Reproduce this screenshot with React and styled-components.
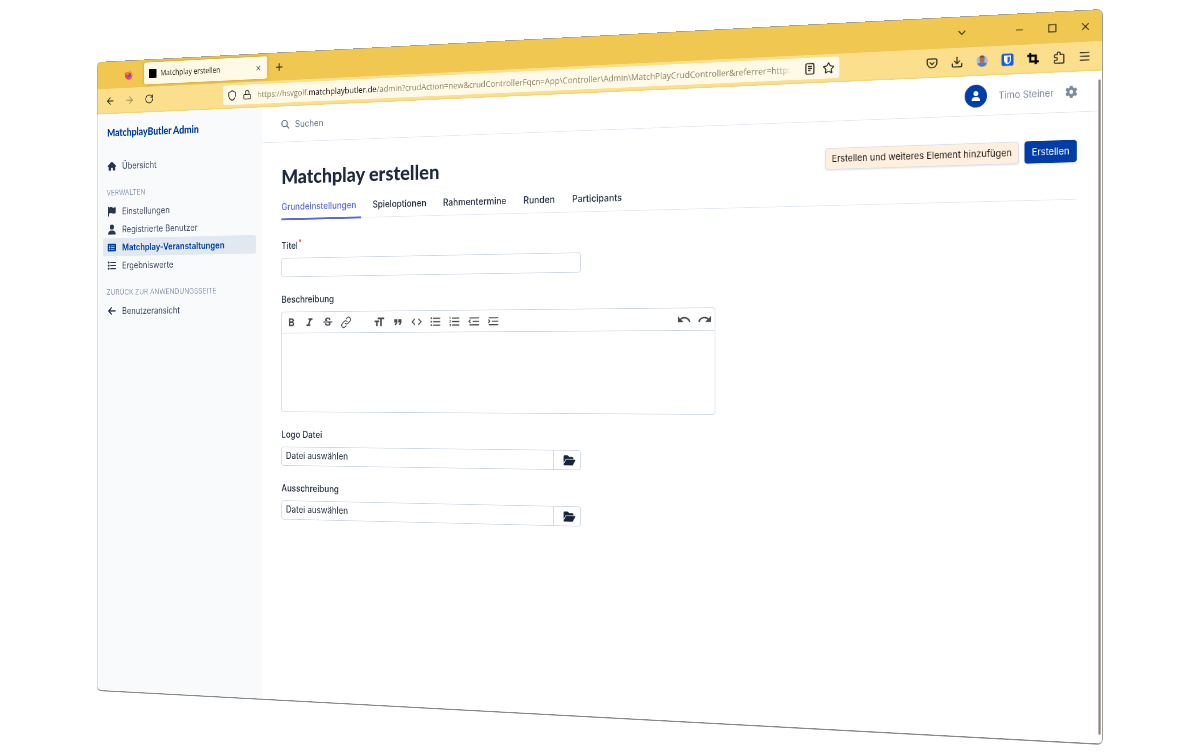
import React from 'react';
import styled, { createGlobalStyle } from 'styled-components';
import {
  ArrowLeft, ArrowRight, ChevronDown, Download, Lock, Menu, Minus, Plus,
  RotateCw, Shield, Star, X,
} from 'lucide-react';
import {
  FaArrowLeft, FaFlag, FaFolderOpen, FaGear, FaHouse, FaList,
  FaMagnifyingGlass, FaRectangleList, FaUser,
} from 'react-icons/fa6';
import {
  MdCode, MdFormatBold, MdFormatItalic, MdFormatListBulleted, MdFormatListNumbered,
  MdFormatQuote, MdFormatSize, MdRedo, MdStrikethroughS, MdUndo,
} from 'react-icons/md';

const MANAGE_ITEMS = [
  { label: 'Einstellungen', icon: FaFlag },
  { label: 'Registrierte Benutzer', icon: FaUser },
  { label: 'Matchplay-Veranstaltungen', icon: FaRectangleList, active: true },
  { label: 'Ergebniswerte', icon: FaList },
];

const TABS = ['Grundeinstellungen', 'Spieloptionen', 'Rahmentermine', 'Runden', 'Participants'];

const EDITOR_TOOLS = [
  { name: 'Fett', icon: MdFormatBold },
  { name: 'Kursiv', icon: MdFormatItalic },
  { name: 'Durchgestrichen', icon: MdStrikethroughS },
  { name: 'Link', icon: LinkIcon },
  { name: 'Überschrift', icon: MdFormatSize, start: true },
  { name: 'Zitat', icon: MdFormatQuote },
  { name: 'Code', icon: MdCode },
  { name: 'Liste', icon: MdFormatListBulleted },
  { name: 'Nummerierung', icon: MdFormatListNumbered },
  { name: 'Einzug verkleinern', icon: OutdentIcon },
  { name: 'Einzug vergrößern', icon: IndentIcon },
];

function App() {
  return (
    <>
      <GlobalStyle />
      <Stage>
        <BrowserWindow>
          <TabStrip>
            <IconButton aria-label="Firefox"><FirefoxIcon /></IconButton>
            <BrowserTab>
              <Favicon />
              <TabTitle>Matchplay erstellen</TabTitle>
              <TabClose aria-label="Tab schließen"><X size={12} /></TabClose>
            </BrowserTab>
            <IconButton aria-label="Neuer Tab"><Plus size={18} /></IconButton>
            <WindowControls>
              <IconButton aria-label="Alle Tabs"><ChevronDown size={18} /></IconButton>
              <ControlGroup>
                <ControlButton aria-label="Minimieren"><Minus size={16} strokeWidth={1.5} /></ControlButton>
                <ControlButton aria-label="Maximieren"><MaximizeIcon /></ControlButton>
                <ControlButton aria-label="Schließen"><X size={18} strokeWidth={1.5} /></ControlButton>
              </ControlGroup>
            </WindowControls>
          </TabStrip>
          <NavBar>
            <ButtonGroup>
              <IconButton aria-label="Zurück"><ArrowLeft size={18} /></IconButton>
              <IconButton aria-label="Vor" $dim><ArrowRight size={18} /></IconButton>
              <IconButton aria-label="Neu laden"><RotateCw size={17} /></IconButton>
            </ButtonGroup>
            <UrlBar>
              <Shield size={18} />
              <Lock size={16} />
              <UrlText>
                https://hsvgolf.<strong>matchplaybutler.de</strong>
                /admin?crudAction=new&amp;crudControllerFqcn=App\Controller\Admin\MatchPlayCrudController&amp;referrer=http:
              </UrlText>
              <ReaderIcon />
              <Star size={18} />
            </UrlBar>
            <ButtonGroup>
              <IconButton aria-label="Pocket"><PocketIcon /></IconButton>
              <IconButton aria-label="Downloads"><Download size={18} /></IconButton>
              <IconButton aria-label="Profil"><ProfileIcon /></IconButton>
              <IconButton aria-label="Bitwarden"><VaultIcon /></IconButton>
              <IconButton aria-label="Screenshot"><CropIcon /></IconButton>
              <IconButton aria-label="Erweiterungen"><PuzzleIcon /></IconButton>
              <IconButton aria-label="Menü"><Menu size={18} /></IconButton>
            </ButtonGroup>
          </NavBar>
          <Page>
            <Sidebar>
              <Brand href="#">MatchplayButler Admin</Brand>
              <MenuLink href="#"><FaHouse size={16} />Übersicht</MenuLink>
              <MenuHeading>VERWALTEN</MenuHeading>
              {MANAGE_ITEMS.map(({ label, icon: Icon, active }) => (
                <MenuLink key={label} href="#" $active={active}>
                  <Icon size={16} />
                  {label}
                </MenuLink>
              ))}
              <MenuHeading>ZURÜCK ZUR ANWENDUNGSSEITE</MenuHeading>
              <MenuLink href="#"><FaArrowLeft size={16} />Benutzeransicht</MenuLink>
            </Sidebar>
            <Main>
              <TopBar>
                <SearchBox>
                  <FaMagnifyingGlass size={14} />
                  <input type="search" placeholder="Suchen" aria-label="Suchen" />
                </SearchBox>
                <UserArea>
                  <Avatar><FaUser size={14} /></Avatar>
                  Timo Steiner
                  <FaGear size={17} />
                </UserArea>
              </TopBar>
              <Content>
                <TitleRow>
                  <Title>Matchplay erstellen</Title>
                  <Actions>
                    <ActionButton>Erstellen und weiteres Element hinzufügen</ActionButton>
                    <ActionButton $primary>Erstellen</ActionButton>
                  </Actions>
                </TitleRow>
                <Tabs>
                  {TABS.map((tab, i) => (
                    <TabLink key={tab} href="#" $active={i === 0}>{tab}</TabLink>
                  ))}
                </Tabs>
                <Field>
                  <Label htmlFor="title">Titel<Required>*</Required></Label>
                  <TextInput id="title" type="text" />
                </Field>
                <Field>
                  <Label htmlFor="description">Beschreibung</Label>
                  <Editor>
                    <EditorToolbar>
                      {EDITOR_TOOLS.map(({ name, icon: Icon, start }) => (
                        <ToolButton key={name} aria-label={name} $start={start}>
                          <Icon size={21} />
                        </ToolButton>
                      ))}
                      <HistoryTools>
                        <ToolButton aria-label="Rückgängig"><MdUndo size={23} /></ToolButton>
                        <ToolButton aria-label="Wiederholen"><MdRedo size={23} /></ToolButton>
                      </HistoryTools>
                    </EditorToolbar>
                    <textarea id="description" />
                  </Editor>
                </Field>
                <FileField id="logo" label="Logo Datei" />
                <FileField id="announcement" label="Ausschreibung" />
              </Content>
            </Main>
            <ScrollTrack><ScrollThumb /></ScrollTrack>
          </Page>
        </BrowserWindow>
      </Stage>
    </>
  );
}

function FileField({ id, label }) {
  return (
    <Field>
      <Label htmlFor={id}>{label}</Label>
      <FileBox>
        <input id={id} type="file" />
        <FileName htmlFor={id}>Datei auswählen</FileName>
        <BrowseButton aria-label="Durchsuchen"><FaFolderOpen size={19} /></BrowseButton>
      </FileBox>
    </Field>
  );
}

const GlobalStyle = createGlobalStyle`
  *, *::before, *::after { box-sizing: border-box; }
  body {
    margin: 0;
    background: #fff;
    color: #1e293b;
    font-family: Inter, 'Liberation Sans', sans-serif;
    font-size: 14px;
    line-height: 20px;
  }
  button, input, textarea { font: inherit; color: inherit; }
  button { cursor: pointer; }
  svg { flex-shrink: 0; }
`;

const Stage = styled.div`
  height: 100vh;
  padding: 62px 0 0 97px;
  overflow: hidden;
`;

// The window is turned away to the left, so it is laid out larger than the stage
const BrowserWindow = styled.div`
  display: flex;
  flex-direction: column;
  width: 135vw;
  height: 135vh;
  overflow: hidden;
  border: 1px solid #a39d90;
  border-bottom: 2px solid #8a8a8a;
  border-radius: 8px;
  transform-origin: 0 0;
  transform: matrix3d(
    0.5306, -0.02796, 0, -0.00008974,
    0, 0.6197, 0, 0,
    0, 0, 1, 0,
    0, 0, 0, 1
  );
`;

const TabStrip = styled.div`
  display: flex;
  align-items: center;
  height: 43px;
  flex-shrink: 0;
  padding-left: 43px;
  background: #f0c750;
  color: #2b2a20;
  font-family: 'Open Sans', sans-serif;
`;

const IconButton = styled.button`
  display: flex;
  align-items: center;
  justify-content: center;
  width: 32px;
  height: 32px;
  padding: 0;
  border: none;
  border-radius: 4px;
  background: none;
  opacity: ${({ $dim }) => ($dim ? 0.45 : 1)};
`;

const BrowserTab = styled.div`
  display: flex;
  align-items: center;
  gap: 7px;
  width: 224px;
  height: 35px;
  margin: 0 5px 0 12px;
  padding: 0 10px 0 9px;
  border-radius: 4px;
  background: #fff9e7;
  box-shadow: 0 0 4px #8a6a1088;
  font-size: 12px;
`;

const Favicon = styled.span`
  width: 14px;
  height: 14px;
  background: #000;
`;

const TabTitle = styled.span`
  flex: 1;
  white-space: nowrap;
`;

const TabClose = styled.button`
  display: flex;
  padding: 0;
  border: none;
  background: none;
`;

const WindowControls = styled.div`
  display: flex;
  align-items: center;
  gap: 43px;
  margin-left: auto;
`;

const ControlGroup = styled.div`
  display: flex;
`;

const ControlButton = styled(IconButton)`
  width: 46px;
`;

const NavBar = styled.div`
  display: flex;
  align-items: center;
  height: 41px;
  flex-shrink: 0;
  padding: 0 8px;
  border-bottom: 2px solid #f6d478;
  background: #fbdf8d;
  color: #2b2a20;
`;

const ButtonGroup = styled.div`
  display: flex;
  gap: 4px;
`;

const UrlBar = styled.div`
  display: flex;
  align-items: center;
  gap: 10px;
  flex: 1;
  min-width: 0;
  height: 31px;
  margin: 0 120px;
  padding: 0 7px;
  border-radius: 4px;
  background: #fff9e7;
  font-family: 'Open Sans', sans-serif;
`;

const UrlText = styled.div`
  flex: 1;
  min-width: 0;
  overflow: hidden;
  white-space: nowrap;
  color: #8b8262;
  font-size: 13px;
  mask-image: linear-gradient(to right, #000 96%, transparent);
  strong {
    color: #15141a;
    font-weight: 400;
  }
`;

const Page = styled.div`
  display: flex;
  flex: 1;
  min-height: 0;
  background: #fff;
`;

const Sidebar = styled.nav`
  width: 302px;
  flex-shrink: 0;
  padding: 20px 10px;
  border-right: 1px solid #e2e8f0;
  background: #f8fafc;
`;

const Brand = styled.a`
  display: block;
  margin-bottom: 29px;
  padding: 0 8px;
  color: #003da6;
  font-family: Lato, sans-serif;
  font-size: 16px;
  font-weight: 900;
  text-decoration: none;
`;

const MenuLink = styled.a`
  display: flex;
  align-items: center;
  gap: 11px;
  height: 29px;
  padding: 0 9px;
  border-radius: 4px;
  background: ${({ $active }) => ($active ? '#e2e8f0' : 'none')};
  color: ${({ $active }) => ($active ? '#003da6' : '#3f4b5e')};
  font-weight: ${({ $active }) => ($active ? 600 : 400)};
  text-decoration: none;
  white-space: nowrap;
  svg { color: ${({ $active }) => ($active ? '#003da6' : '#28364c')}; }
`;

const MenuHeading = styled.div`
  padding: 21px 7px 7px;
  color: #8c9bb2;
  font-size: 12px;
  line-height: 16px;
`;

const Main = styled.main`
  flex: 1;
  min-width: 0;
`;

const TopBar = styled.header`
  display: flex;
  align-items: center;
  justify-content: space-between;
  height: 56px;
  padding: 0 28px 0 34px;
  border-bottom: 1px solid #e2e8f0;
`;

const SearchBox = styled.label`
  display: flex;
  align-items: center;
  gap: 10px;
  color: #64748b;
  input {
    padding: 0;
    border: none;
    outline: none;
    background: none;
  }
  input::placeholder { color: #64748b; opacity: 1; }
`;

const UserArea = styled.div`
  display: flex;
  align-items: center;
  gap: 16px;
  color: #7c8a9f;
  font-size: 13px;
`;

const Avatar = styled.span`
  display: flex;
  align-items: center;
  justify-content: center;
  width: 32px;
  height: 32px;
  border-radius: 50%;
  background: #003da6;
  color: #fff;
`;

const Content = styled.div`
  padding: 33px 29px 0 34px;
`;

const TitleRow = styled.div`
  display: flex;
  align-items: center;
  justify-content: space-between;
`;

const Title = styled.h1`
  margin: 0;
  font-family: Lato, sans-serif;
  font-size: 31px;
  font-weight: 900;
  line-height: 40px;
`;

const Actions = styled.div`
  display: flex;
  gap: 8px;
`;

const ActionButton = styled.button`
  height: 31px;
  padding: 0 9px;
  border: 1px solid ${({ $primary }) => ($primary ? '#003da6' : '#dcdfe6')};
  border-radius: 4px;
  background: ${({ $primary }) => ($primary ? '#003da6' : '#ffefdf')};
  color: ${({ $primary }) => ($primary ? '#fff' : '#1a1a1a')};
  box-shadow: 0 1px 3px #0002;
  font-size: 13px;
  white-space: nowrap;
`;

const Tabs = styled.div`
  display: flex;
  gap: 20px;
  height: 48px;
  margin-bottom: 31px;
  border-bottom: 1px solid #e2e8f0;
`;

const TabLink = styled.a`
  display: flex;
  align-items: center;
  height: 49px;
  padding: 10px 8px 0 0;
  border-bottom: 3px solid ${({ $active }) => ($active ? '#5b69dd' : 'transparent')};
  color: ${({ $active }) => ($active ? '#5b69dd' : '#1e293b')};
  font-weight: 500;
  text-decoration: none;
  white-space: nowrap;
`;

const Field = styled.div`
  margin-bottom: 25px;
`;

const Label = styled.label`
  display: block;
  width: max-content;
  margin-bottom: 9px;
  font-weight: 500;
`;

const Required = styled.sup`
  margin-left: 1px;
  color: #ef2020;
  line-height: 0;
`;

const TextInput = styled.input`
  display: block;
  width: 506px;
  max-width: 100%;
  height: 30px;
  padding: 0 8px;
  border: 1px solid #cbd5e1;
  border-radius: 4px;
  background: #fff;
`;

const Editor = styled.div`
  width: 718px;
  max-width: 100%;
  border: 1px solid #cbd5e1;
  border-radius: 4px;
  textarea {
    display: block;
    width: 100%;
    height: 122px;
    padding: 8px;
    border: none;
    outline: none;
    resize: none;
    background: none;
  }
`;

const EditorToolbar = styled.div`
  display: flex;
  align-items: center;
  height: 33px;
  border-bottom: 1px solid #cbd5e1;
  color: #4a4a4a;
`;

const ToolButton = styled.button`
  display: flex;
  align-items: center;
  justify-content: center;
  width: 32px;
  height: 28px;
  margin-left: ${({ $start }) => ($start ? '25px' : 0)};
  padding: 0;
  border: none;
  background: none;
`;

const HistoryTools = styled.div`
  display: flex;
  margin-left: auto;
`;

const FileBox = styled.div`
  display: flex;
  position: relative;
  width: 506px;
  max-width: 100%;
  height: 30px;
  border: 1px solid #cbd5e1;
  border-radius: 4px;
  input {
    position: absolute;
    inset: 0;
    width: 100%;
    opacity: 0;
  }
`;

const FileName = styled.label`
  flex: 1;
  padding: 3px 7px;
`;

const BrowseButton = styled.button`
  display: flex;
  align-items: center;
  justify-content: center;
  width: 44px;
  padding: 0 0 0 8px;
  border: none;
  border-left: 1px solid #cbd5e1;
  background: none;
  color: #16233a;
`;

const ScrollTrack = styled.div`
  width: 6px;
  padding: 12px 0 12px 1px;
`;

const ScrollThumb = styled.div`
  width: 3px;
  height: 100%;
  border-radius: 2px;
  background: #858585;
`;

function FirefoxIcon() {
  return (
    <svg width="16" height="16" viewBox="0 0 16 16">
      <defs>
        <linearGradient id="flame" x1="1" y1="0" x2="0.2" y2="1">
          <stop offset="0" stopColor="#ffd43a" />
          <stop offset="0.45" stopColor="#ff7a2d" />
          <stop offset="1" stopColor="#f0245e" />
        </linearGradient>
      </defs>
      <path d="M9 0c1 1.500 2 2 3 3.200.8.2 1.500 1 2 1.800C16.500 11 13 16 8 16 3.500 16 .5 12.800.5 8.500.5 6 1.500 4 2.500 3c0 .8.200 1.200.6 1.600C4 4 5 4 6 4.200 8 3.500 9 2 9 0z" fill="url(#flame)" />
      <circle cx="8.200" cy="8.800" r="3.600" fill="#7a42d8" />
      <path d="M3.500 6.500c2-.8 3.500-.3 5 .9-1.500 0-2 .8-3 .9-1 .1-1.600-.7-2-1.800z" fill="#ff9f2e" />
    </svg>
  );
}

function MaximizeIcon() {
  return (
    <svg width="12" height="12" viewBox="0 0 12 12" fill="none" stroke="currentColor" strokeWidth="1.300">
      <rect x="1" y="1" width="10" height="10" />
    </svg>
  );
}

function ReaderIcon() {
  return (
    <svg width="18" height="18" viewBox="0 0 18 18" fill="none" stroke="currentColor" strokeWidth="1.600">
      <rect x="3" y="1.500" width="12" height="15" rx="2" />
      <path d="M6 5.500h6M6 8.500h6M6 11.500h4" />
    </svg>
  );
}

function PocketIcon() {
  return (
    <svg width="18" height="18" viewBox="0 0 18 18" fill="none" stroke="currentColor" strokeWidth="1.600" strokeLinecap="round" strokeLinejoin="round">
      <path d="M4 3h10a2 2 0 0 1 2 2v3.500a7 7 0 0 1-14 0V5a2 2 0 0 1 2-2z" />
      <path d="M6 8l3 2.800L12 8" />
    </svg>
  );
}

function ProfileIcon() {
  return (
    <svg width="18" height="18" viewBox="0 0 18 18">
      <defs>
        <clipPath id="face"><circle cx="9" cy="9" r="8" /></clipPath>
      </defs>
      <g clipPath="url(#face)">
        <rect width="18" height="18" fill="#a9bdd6" />
        <path d="M0 18c0-5 4-7 9-7s9 2 9 7z" fill="#4d7fc4" />
        <ellipse cx="9" cy="7" rx="3.600" ry="5" fill="#b5695a" />
        <path d="M5.400 5c0-5 7.200-5 7.200 0-2-1.500-5-1.500-7.200 0z" fill="#6f4a45" />
      </g>
    </svg>
  );
}

function VaultIcon() {
  return (
    <svg width="18" height="18" viewBox="0 0 18 18">
      <rect x="0.500" y="0.500" width="17" height="17" rx="2.500" fill="#175ddc" />
      <path d="M4 3h10v6.500c0 3-2.500 4.800-5 6-2.500-1.200-5-3-5-6z" fill="#fff" />
      <path d="M9 4.700h3.400v4.800c0 2-1.600 3.200-3.400 4.200z" fill="#175ddc" />
    </svg>
  );
}

function CropIcon() {
  return (
    <svg width="18" height="18" viewBox="0 0 18 18" fill="none" stroke="#000" strokeWidth="2.800">
      <path d="M5 1v12h12M1 5h12v12" />
    </svg>
  );
}

function PuzzleIcon() {
  return (
    <svg width="18" height="18" viewBox="0 0 18 18" fill="none" stroke="currentColor" strokeWidth="1.600" strokeLinejoin="round">
      <path d="M7 5V3.500a2 2 0 0 1 4 0V5h4a1 1 0 0 1 1 1v10a1 1 0 0 1-1 1H4a1 1 0 0 1-1-1v-3h2a2 2 0 0 0 0-4H3V6a1 1 0 0 1 1-1z" />
    </svg>
  );
}

function LinkIcon({ size }) {
  return (
    <svg width={size} height={size} viewBox="0 0 24 24" fill="none" stroke="currentColor" strokeWidth="1.700" strokeLinecap="round">
      <path d="M10 13.500a4 4 0 0 0 5.700.3l4-4.200a4 4 0 0 0-5.700-5.600l-2 2" />
      <path d="M14 10.500a4 4 0 0 0-5.700-.3l-4 4.200A4 4 0 0 0 10 20l2-2" />
    </svg>
  );
}

function OutdentIcon({ size }) {
  return (
    <svg width={size} height={size} viewBox="0 0 24 24" fill="none" stroke="currentColor" strokeWidth="2">
      <path d="M4 6h18M10 12h12M4 18h18M6 9l-3 3 3 3" />
    </svg>
  );
}

function IndentIcon({ size }) {
  return (
    <svg width={size} height={size} viewBox="0 0 24 24" fill="none" stroke="currentColor" strokeWidth="2">
      <path d="M4 6h18M10 12h12M4 18h18M3 9l3 3-3 3" />
    </svg>
  );
}

export default App;
